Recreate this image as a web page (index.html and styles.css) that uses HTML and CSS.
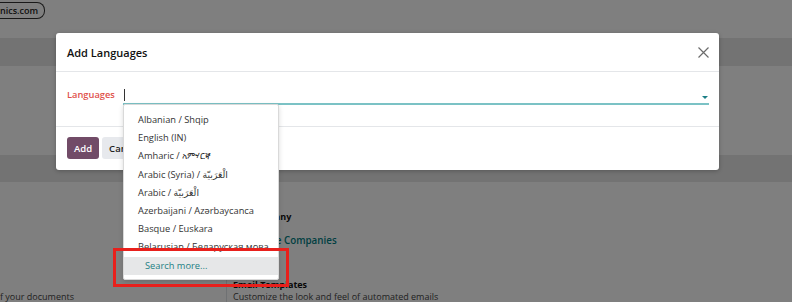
FILE: index.html
```html
<!doctype html>
<html>
  <head>
    <meta http-equiv="Content-type" content="text/html; charset=utf-8">
    <title>Settings &mdash; Add Languages</title>
    <link rel="stylesheet" href="styles.css">
  </head>
  <body>

    <div class="page">
      <div class="topbar">
        <span class="db-pill">nics.com</span>
      </div>
      <div class="band"></div>
      <div class="panel"></div>
      <div class="band band-low"></div>

      <section class="settings">
        <div class="setting-left">
          <p class="muted">f your documents</p>
        </div>
        <div class="setting-right">
          <h3>My Company</h3>
          <a href="#" class="link">&rarr; Manage Companies</a>
          <h3 class="gap">Email Templates</h3>
          <p class="muted">Customize the look and feel of automated emails</p>
        </div>
      </section>
    </div>

    <div class="backdrop"></div>

    <div class="modal">
      <header class="modal-header">
        <h1>Add Languages</h1>
        <button class="close" aria-label="Close">
          <svg width="11" height="11" viewBox="0 0 11 11">
            <path d="M0.5 0.5 L10.5 10.5 M10.5 0.5 L0.5 10.5" stroke="#6c6c6c" stroke-width="1.2" fill="none"/>
          </svg>
        </button>
      </header>

      <div class="modal-body">
        <label for="langs" class="field-label">Languages</label>
        <div class="field">
          <span class="cursor"></span>
          <span class="caret"></span>

          <div class="dropdown">
            <ul>
              <li>Albanian / Shqip</li>
              <li>English (IN)</li>
              <li>Amharic / አምሃርኛ</li>
              <li>Arabic (Syria) / الْعَرَبيّة</li>
              <li>Arabic / الْعَرَبيّة</li>
              <li>Azerbaijani / Azərbaycanca</li>
              <li>Basque / Euskara</li>
              <li>Belarusian / Беларуская мова</li>
            </ul>
            <div class="search-more">Search more...</div>
          </div>
        </div>
      </div>

      <footer class="modal-footer">
        <button class="btn btn-primary">Add</button>
        <button class="btn btn-secondary">Cancel</button>
      </footer>
    </div>

    <div class="highlight"></div>

  </body>
</html>
```

FILE: styles.css
```css
html, body {
  margin: 0;
  padding: 0;
}

body {
  width: 792px;
  height: 302px;
  overflow: hidden;
  position: relative;
  background: #fff;
  color: #212529;
  font-family: "Open Sans", "DejaVu Sans", sans-serif;
  font-size: 9.3px;
  line-height: 1;
}

/* page behind the dialog */

.topbar {
  height: 38px;
}

.db-pill {
  display: inline-block;
  margin-top: 2px;
  padding: 2px 6px 2px 0;
  height: 11px;
  line-height: 11px;
  font-size: 9px;
  border: 1px solid #333;
  border-left: 0;
  border-radius: 0 8px 8px 0;
  font-weight: 600;
  color: #1c1c1c;
}

.band {
  height: 28px;
  background: #e6e6e6;
}

.band-low {
  height: 27px;
}

.panel {
  height: 89px;
}

.settings {
  display: grid;
  grid-template-columns: 226px 1fr;
}

.setting-left {
  display: flex;
  align-items: flex-end;
}

.setting-right {
  border-left: 1px solid #dee2e6;
  padding: 29px 0 0 6px;
}

.settings p,
.settings h3 {
  margin: 0;
  line-height: 12px;
}

.settings h3 {
  font-size: 9px;
  font-weight: 700;
  color: #111;
}

.settings h3.gap {
  margin-top: 32px;
}

.link {
  display: block;
  margin-top: 12px;
  line-height: 12px;
  font-size: 9.8px;
  font-weight: 600;
  color: #017e84;
  text-decoration: none;
}

.muted {
  color: #444;
  font-size: 9px;
}

.backdrop {
  position: absolute;
  top: 0;
  left: 0;
  right: 0;
  bottom: 0;
  background: rgba(0, 0, 0, 0.5);
}

/* dialog */

.modal {
  position: absolute;
  left: 56px;
  top: 33px;
  width: 663px;
  background: #fff;
  border-radius: 3px;
  box-shadow: 0 1px 4px rgba(0, 0, 0, 0.25);
}

.modal-header {
  display: flex;
  align-items: center;
  justify-content: space-between;
  height: 38px;
  padding: 0 10px 0 11px;
  border-bottom: 1px solid #e4e6e9;
}

.modal-header h1 {
  margin: 0;
  font-size: 11px;
  font-weight: 600;
  color: #111;
}

.close {
  border: 0;
  padding: 0;
  background: none;
  width: 11px;
  height: 11px;
  display: flex;
}

.modal-body {
  display: flex;
  height: 54px;
  padding: 0 10px 0 11px;
  border-bottom: 1px solid #e4e6e9;
}

.field-label {
  width: 56px;
  padding-top: 18px;
  font-weight: 600;
  color: #e0504b;
}

.field {
  position: relative;
  flex: 1;
  height: 31px;
  border-bottom: 2px solid #7bc2c5;
}

.cursor {
  position: absolute;
  left: 1px;
  top: 17px;
  height: 12px;
  border-left: 1px solid #333;
}

.caret {
  position: absolute;
  right: 1px;
  top: 24px;
  border-left: 3px solid transparent;
  border-right: 3px solid transparent;
  border-top: 3px solid #1c7f86;
}

.dropdown {
  position: absolute;
  left: 0;
  top: 32px;
  width: 154px;
  background: #fff;
  border: 1px solid #d9d9d9;
  border-radius: 2px;
  box-shadow: 0 2px 5px rgba(0, 0, 0, 0.15);
  padding: 6px 0 4px;
}

.dropdown ul {
  list-style: none;
  margin: 0;
  padding: 0;
}

.dropdown li {
  height: 18.2px;
  line-height: 18px;
  padding-left: 14px;
  color: #333;
  white-space: nowrap;
  overflow: hidden;
}

.search-more {
  height: 18px;
  line-height: 18px;
  padding-left: 21px;
  background: #e6e7e8;
  color: #1d7f84;
}

.modal-footer {
  display: flex;
  gap: 3px;
  padding: 10px 11px 11px;
}

.btn {
  height: 22px;
  border: 0;
  border-radius: 3px;
  font-family: inherit;
  font-size: 9.5px;
  font-weight: 600;
  padding: 0 7px;
}

.btn-primary {
  background: #714b67;
  color: #fff;
}

.btn-secondary {
  background: #e7e9ed;
  color: #222;
}

/* annotation drawn over the screenshot */

.highlight {
  position: absolute;
  left: 113px;
  top: 248px;
  width: 170px;
  height: 33px;
  border: 3px solid #e8201c;
}
```
